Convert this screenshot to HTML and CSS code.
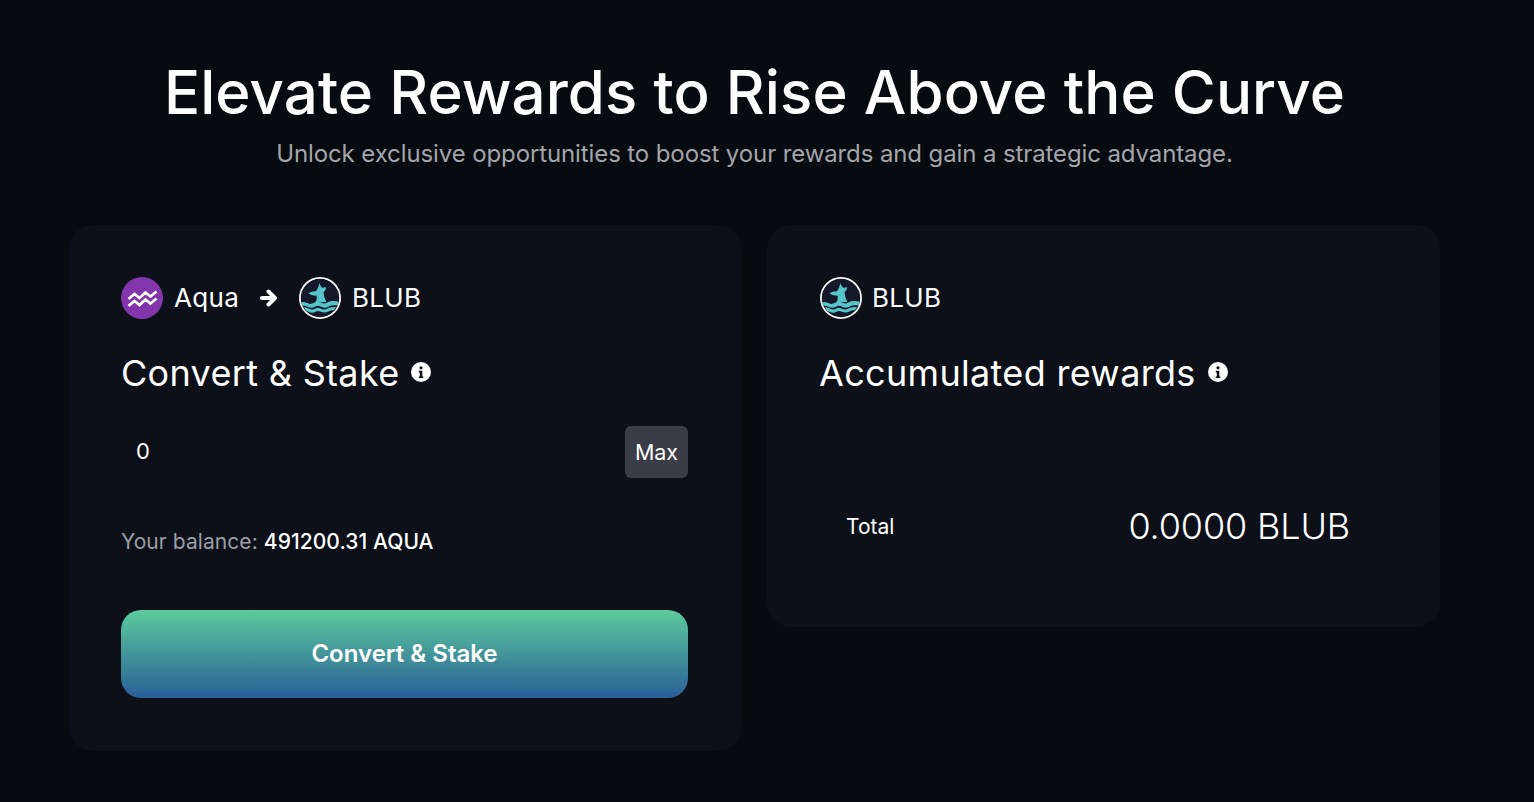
FILE: index.html
```html
<!DOCTYPE html>
<html lang="en">
<head>
<meta charset="utf-8">
<title>Elevate Rewards</title>
<link rel="stylesheet" href="styles.css">
</head>
<body>
<svg class="defs" width="0" height="0" aria-hidden="true">
  <symbol id="blub" viewBox="0 0 42 42">
    <circle cx="21" cy="21" r="20.100" fill="#141829" stroke="#fff" stroke-width="1.700"/>
    <path d="M20.300 5.700C20.800 8 22 9.800 23.700 11C24.800 10.300 26 10 27.200 10.200C26.900 12.500 25.800 14 24.600 15C24.800 18.500 25.500 21.500 27.500 25L16 25.500C17.800 23.500 18.300 21 17.500 18.800C14.500 18.800 11.500 18 9.300 16.300C12 14.800 14.500 14 17 14.200C18.800 11.500 20 9 20.300 5.700Z" fill="#56c4c8"/>
    <path d="M2.500 25C5 24.700 7 25.300 9 26.300C11 27.300 12.800 27 15 25.800C17.500 24.500 19.500 24.300 22 25.600C24.300 26.800 26 26.800 28.300 25.500C31.500 23.800 35 23.600 39.500 24.500L38.800 28.500C35 28 32 28.300 29.500 29.700C26.500 31.200 24 31 21.500 29.600C19.500 28.500 18 28.700 16 29.800C13.500 31.200 11 31.100 8.500 29.800C6.700 28.800 5.200 28.600 3.300 28.800Z" fill="#56c4c8"/>
    <path d="M5 30.300C7.300 30.300 8.800 31 10.200 31.800C12.500 32.900 14.500 32.700 16.500 31.600C18.200 30.600 19.700 30.600 21.500 31.600C23.800 32.800 26.200 32.800 28.500 31.500C30.500 30.400 33 29.900 37 30L34.800 33.300C32.500 33.300 31 33.700 29.500 34.500C26.700 35.900 23.800 35.800 21 34.500C19.500 33.700 18.600 33.700 17.200 34.500C14.600 36 11.800 36 9.300 34.800C8.500 34.400 8 34.100 7.200 33.900Z" fill="#56c4c8"/>
  </symbol>
  <symbol id="info" viewBox="0 0 20 20">
    <circle cx="10" cy="10" r="10" fill="#fff"/>
    <circle cx="10" cy="5.800" r="1.600" fill="#0d1018"/>
    <path d="M7.800 8.800h3.500v5.600h1v1.700h-4.500v-1.700h1v-3.900h-1z" fill="#0d1018"/>
  </symbol>
</svg>
<main class="page">
  <header class="hero">
    <h1 class="hero-title">Elevate Rewards to Rise Above the Curve</h1>
    <p class="hero-sub">Unlock exclusive opportunities to boost your rewards and gain a strategic advantage.</p>
  </header>
  <section class="cards">
    <article class="card card-left">
      <div class="tokens">
        <span class="token">
          <svg class="token-icon" viewBox="0 0 42 42" aria-hidden="true">
            <circle cx="21" cy="21" r="21" fill="#8335ac"/>
            <path d="M7.500 22L13.500 17L18.500 21L24.500 15.500L29.500 19.500L35.500 14.500" fill="none" stroke="#fff" stroke-width="2.600"/>
            <path d="M7.500 29L13.500 24L18.500 28L24.500 22.500L29.500 26.500L35.500 21.500" fill="none" stroke="#fff" stroke-width="2.600"/>
          </svg>
          <span class="token-name">Aqua</span>
        </span>
        <svg class="arrow" viewBox="0 0 18 18" aria-hidden="true">
          <path d="M2 9h12.500M8.500 2.500l6.500 6.500-6.500 6.500" fill="none" stroke="#fff" stroke-width="4" stroke-linecap="round" stroke-linejoin="round"/>
        </svg>
        <span class="token">
          <svg class="token-icon"><use href="#blub"/></svg>
          <span class="token-name">BLUB</span>
        </span>
      </div>
      <h2 class="card-title">Convert &amp; Stake <svg class="info"><use href="#info"/></svg></h2>
      <div class="amount">
        <span class="amount-value">0</span>
        <button class="max" type="button">Max</button>
      </div>
      <p class="balance">Your balance: <strong class="balance-value">491200.31 AQUA</strong></p>
      <button class="cta" type="button">Convert &amp; Stake</button>
    </article>
    <article class="card card-right">
      <div class="tokens">
        <span class="token">
          <svg class="token-icon"><use href="#blub"/></svg>
          <span class="token-name">BLUB</span>
        </span>
      </div>
      <h2 class="card-title">Accumulated rewards <svg class="info"><use href="#info"/></svg></h2>
      <div class="spacer-row"></div>
      <div class="total">
        <span class="total-label">Total</span>
        <span class="total-value">0.0000 BLUB</span>
      </div>
    </article>
  </section>
</main>
</body>
</html>
```
FILE: styles.css
```css
* { box-sizing: border-box; }
html, body { margin: 0; height: 100%; }
body {
  background: #070a0e;
  color: #fff;
  font-family: Inter, "Liberation Sans", sans-serif;
  overflow: hidden;
}
.defs { position: absolute; }
.page { padding: 51px 94px 0 69px; }
.hero { text-align: center; }
.hero-title {
  margin: 0;
  font-size: 60px;
  line-height: 82px;
  font-weight: 450;
  letter-spacing: 0.09px;
}
.hero-sub {
  margin: 0;
  padding-top: 1px;
  font-size: 24px;
  line-height: 40px;
  letter-spacing: -0.11px;
  color: #a3a5aa;
}
.cards {
  display: grid;
  grid-template-columns: 672px 673px;
  gap: 26px;
  align-items: start;
  margin-top: 51px;
}
.card {
  background: #0d1018;
  border-radius: 24px;
  padding: 52px;
  display: flex;
  flex-direction: column;
}
.card-left { padding-right: 53px; padding-bottom: 53px; }
.card-right .token-icon { margin-left: 1px; margin-right: -1px; }
.tokens {
  display: flex;
  align-items: center;
  gap: 21px;
  height: 42px;
}
.token {
  display: flex;
  align-items: center;
  gap: 11px;
  font-size: 26px;
  letter-spacing: 0.3px;
}
.token-name { margin-top: -2px; }
.token-icon { width: 42px; height: 42px; flex: none; }
.arrow { width: 18px; height: 18px; flex: none; }
.card-title {
  display: flex;
  align-items: center;
  gap: 12px;
  margin: 27px 0 0;
  font-size: 36px;
  line-height: 54px;
  font-weight: 400;
  letter-spacing: 0.32px;
}
.info { width: 20px; height: 20px; flex: none; margin-top: -3px; }
.amount {
  display: flex;
  align-items: center;
  justify-content: space-between;
  margin-top: 26px;
  height: 52px;
  padding-left: 15px;
}
.amount-value { font-size: 22px; margin-top: -2px; }
.max {
  width: 63px;
  height: 52px;
  padding: 0 0 1px;
  border: 0;
  border-radius: 6px;
  background: #3a3c47;
  color: #fff;
  font: inherit;
  font-size: 21.5px;
}
.balance {
  margin: 47px 0 0;
  padding-top: 1px;
  font-size: 21px;
  line-height: 32px;
  letter-spacing: 0.07px;
  color: #9c9ea5;
}
.balance-value { color: #fff; font-weight: 500; }
.cta {
  margin-top: 52px;
  height: 88px;
  width: 100%;
  padding: 0 0 1px;
  border: 0;
  border-radius: 20px;
  background: linear-gradient(180deg, #5ccb9c 0%, #2a5f98 100%);
  color: #fff;
  font: inherit;
  font-size: 24px;
  font-weight: 600;
}
.spacer-row {
  height: 52px;
  margin-top: 8px;
}
.total {
  display: flex;
  align-items: center;
  justify-content: space-between;
  margin-top: 18px;
  height: 97px;
  padding: 0 38px 0 27px;
}
.total-label { font-size: 21px; }
.total-value { font-size: 36px; font-weight: 300; letter-spacing: -0.15px; margin-top: -1px; }
```
